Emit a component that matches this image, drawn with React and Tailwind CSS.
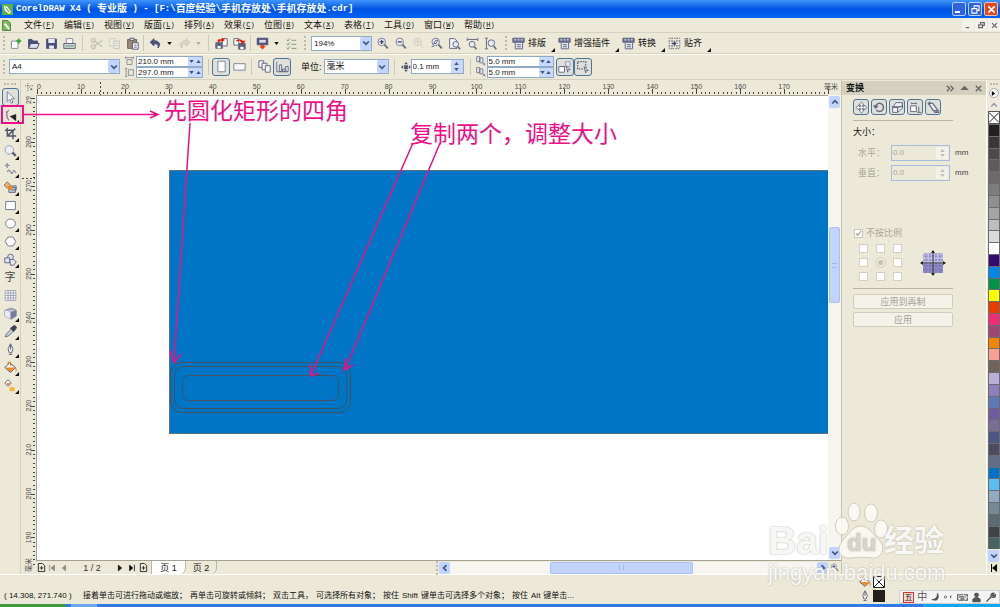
import React from 'react';

const INK = '#666b82'

const Svg = ({size = 'size-[13px]', children, className = ''}) => (
  <svg viewBox="0 0 16 16" fill="none" stroke={INK} strokeWidth="1.2" className={`shrink-0 ${size} ${className}`}>
    {children}
  </svg>
)

const lens = (
  <>
    <circle cx="7" cy="6" r="4.600" fill="#e9ebf6" stroke="#7d8198" />
    <path d="M10.500 9.500l4 4.500" strokeWidth="2.400" stroke="#6d7188" />
  </>
)

const disk = (
  <>
    <path d="M2 2.500h12v11.500H2z" fill="#4a4e78" stroke="#4a4e78" />
    <path d="M4 2.500h8v5H4zM5 10.500h6v4H5z" fill="#e8eaf5" stroke="none" />
  </>
)

const bucket = (
  <>
    <path d="M7 2l7 6-6 6-7-6z" fill="#f7f7fa" stroke="#4f5369" />
    <path d="M2 8h11l-5 5.500z" fill="#f08a1c" stroke="none" />
    <path d="M5 5V1.500h3V6M14 8q2 3 .5 5" stroke="#e07818" />
  </>
)

const nib = <path d="M8 1l3 6-1.500 5h-3L5 7zM8 2v6M6 14h4" fill="#f0f1f8" stroke="#5c6074" />

const icons = {
  new: <><path d="M3 5h8v9H3z" fill="#fff" stroke="#8a8d9c" /><path d="M12 2v6M9 5h6" stroke="#3fa53f" strokeWidth="2.600" /></>,
  open: <><path d="M2 13V3h4l1.500 2H13v3" fill="#4a4e78" stroke="#4a4e78" /><path d="M2 14l2.500-6H15l-2.500 6z" fill="#dfe2f0" stroke="#4a4e78" /></>,
  save: disk,
  print: <><path d="M4 8V2h8v6" fill="#fff" stroke="#8a8d9c" /><path d="M1 8h14v6H1z" fill="#d8dbe6" stroke="#5a5f78" /><path d="M3 11h10" stroke="#6ba86b" strokeWidth="1.600" /></>,
  cut: <><circle cx="4" cy="4" r="2.300" stroke="#c5c3b8" strokeWidth="1.800" /><circle cx="4" cy="12" r="2.300" stroke="#c5c3b8" strokeWidth="1.800" /><path d="M6 5l9 7M6 11l9-7" stroke="#c5c3b8" strokeWidth="1.800" /></>,
  copy: <><path d="M2 2h7v9H2z" fill="#eeece2" stroke="#d0cdc1" /><path d="M7 5h7v9H7z" fill="#eeece2" stroke="#c5c3b8" /><path d="M9 8h3M9 10.500h3" stroke="#cbc8bb" /></>,
  paste: <><path d="M2 3h11v11H2z" fill="#9a8a76" stroke="#6f6454" /><path d="M5 1.500h5v3H5z" fill="#d9d9de" stroke="#5a5f78" /><path d="M8 7h7v8H8z" fill="#f5f6fb" stroke="#5a5f78" /><path d="M10 10h3M10 12.500h3" /></>,
  undo: <path d="M6 2L1.500 6.500 6 11V8.500c4-.5 6 1 5 5 4-4 2-9-5-9z" fill="#4b5078" stroke="#4b5078" />,
  redo: <path d="M10 2l4.500 4.500L10 11V8.500c-4-.5-6 1-5 5-4-4-2-9 5-9z" fill="#d9d7cc" stroke="#cbc9be" />,
  import: <><path d="M1 7h8v7H1z" fill="#5a5f88" /><path d="M3 11h4v3H3z" fill="#fff" stroke="none" /><path d="M9 2h6v9H9z" fill="#fff" /><path d="M4 7V3.500h5M8.500 1.500l3 2-3 2z" fill="#d92318" stroke="#d92318" /></>,
  export: <><path d="M1 2h6v8H1z" fill="#fff" /><path d="M7 8h8v7H7z" fill="#5a5f88" /><path d="M9 12h4v3H9z" fill="#fff" stroke="none" /><path d="M4 5c5-3 8 0 8 1M10 5.500h4L12 8z" fill="none" stroke="#d92318" strokeWidth="1.600" /></>,
  launch: <><path d="M1.500 1.500h13v8h-13z" fill="#4e5378" stroke="#4e5378" /><path d="M4 3.500h8v3.500H4z" fill="#d8dcf0" stroke="none" /><path d="M6 9.500h4v2h2L8 15.500 4 11.500h2z" fill="#e8461a" stroke="none" /></>,
  list: <path d="M2 3l1.500 2L6 1.500M2 8l1.500 2L6 6.500M2 13l1.500 2L6 11.500M8 4h6M8 9h6M8 14h6" stroke="#7c9a78" />,
  zoomIn: <>{lens}<path d="M4.500 6h5M7 3.500v5" stroke="#3c4068" strokeWidth="1.600" /></>,
  zoomOut: <>{lens}<path d="M4.500 6h5" stroke="#3c4068" strokeWidth="1.600" /></>,
  zoomSel: <><circle cx="7" cy="6" r="4.600" stroke="#d0cec3" /><path d="M10.500 9.500l4 4.500M3 6h8M7 2v8" stroke="#d0cec3" /></>,
  zoomAll: <>{lens}<path d="M4.500 8L7 4h2.500L7.500 8zM2 12l3-1" /></>,
  zoomPage: <><path d="M2 2h6l3 3v9H2z" fill="#f4f5fb" /><circle cx="9.500" cy="9" r="3.500" fill="#e9ebf6" /><path d="M12 12l3 3" strokeWidth="2" /></>,
  zoomWide: <><path d="M1.500 1v4M14.500 1v4M2 3h12" /><circle cx="7.500" cy="9" r="3.600" fill="#e9ebf6" /><path d="M10 12l3 3" strokeWidth="2" /></>,
  zoomTall: <><path d="M1 1.500h4M1 14.500h4M3 2v12" /><circle cx="9" cy="7.500" r="4" fill="#e9ebf6" /><path d="M12 11l3 4" strokeWidth="2" /></>,
  layout: <><path d="M1 1.500h14v5H1z" fill="#6b7094" /><path d="M3 3.500h2M7 3.500h2M11 3.500h2" stroke="#fff" /><path d="M4 6.500h9v8H4z" fill="#e4e6f2" /><path d="M6 9.500h5M6 12h5" /></>,
  snap: <><path d="M1.500 1.500h13v13h-13zM5 1v14M11 1v14M1 5h14M1 11h14" strokeDasharray="1.500 1.500" /><path d="M5 8h5M8 5.500v5" stroke="#3c4068" strokeWidth="1.800" /></>,
  pageW: <path d="M1 3h14M1 1v4M15 1v4M3.500 6.500h9v8.500h-9z" />,
  pageH: <path d="M2 1v14M0 1h4M0 15h4M6 3h9v10H6z" />,
  portrait: <path d="M3.500 1.500h9v13h-9z" fill="#fff" stroke="#85889a" />,
  landscape: <path d="M1 4.500h14v8H1z" fill="#f8f8fb" stroke="#85889a" />,
  pages: <><path d="M1 1h6v8H1z" fill="#f4f5fb" /><path d="M5 4h6v8H5z" fill="#f4f5fb" /><path d="M9 7h6v8H9z" fill="#f4f5fb" /></>,
  bars: <path d="M1 2v12.500h14M4 6h3v8H4zM8 11h3v3H8zM12 8h3v6h-3z" fill="#f0f1f8" />,
  nudge: <path d="M8 0l3 3.500H5zM8 16l3-3.500H5zM0 8l3.500-3v6zM16 8l-3.500-3v6zM5 5h6v6H5z" fill="#4f5369" stroke="none" />,
  dup: <path d="M1 1h5v8H1zM6 3h5v8H6zM11 11l4 4M15 11l-4 4" fill="#dfe1ec" />,
  treat: <><path d="M1 8h7v7H1z" fill="#fff" /><path d="M9 2h6v6H9z" fill="#dfe1ec" stroke="#a0a3b4" /><path d="M10 7l5 5h-3v3z" fill="#fff" /></>,
  marquee: <><path d="M2 2h10v9H2z" strokeDasharray="2 1.200" strokeWidth="1.600" /><path d="M10 8l5 5h-3v3z" fill="#fff" /></>,
  pick: <path d="M4 1v12l3-3 2 5 2-1-2-4.500h4z" fill="#fff" stroke="#80849c" />,
  shape: <><path d="M6 1C2 5 3 10 6 14M2 4l3-1M3 9l2-1" stroke="#85899c" strokeWidth="1.500" /><path d="M7 9l8-3v9z" fill="#22242e" stroke="none" /></>,
  crop: <path d="M4 1v10h11M1 4h10v11M14 2L5 10" stroke="#50546e" strokeWidth="1.700" />,
  zoom: <><circle cx="6.500" cy="6" r="5.200" fill="#eceef8" stroke="#9a9db0" /><path d="M10.500 9.500l4 4" strokeWidth="3" stroke="#5d6178" /></>,
  freehand: <path d="M4 0v6M1 3h6M4 11c2-4 3-2 4 0s2 3 3 0 2-1 4 1" stroke="#8a8da0" strokeWidth="1.500" />,
  smart: <><path d="M4 1l4 4-4 4-4-4z" fill="#eeb06c" stroke="#8a7a6c" /><path d="M6 8h8v6H6zM9 6h6v5H9z" fill="#c6c8d8" /><path d="M5 6h5v5H5z" fill="#e08a2c" stroke="none" /></>,
  rect: <path d="M2 3h12v10H2z" fill="#fff" stroke="#74788c" />,
  ellipse: <ellipse cx="8" cy="8" rx="6" ry="5.500" fill="#fff" stroke="#74788c" />,
  polygon: <path d="M5 2.500h6L14.500 8 11 13.500H5L1.500 8z" fill="#fff" stroke="#74788c" />,
  shapes: <><circle cx="8" cy="5" r="3.500" fill="#e3e5ef" /><path d="M1 6h6v6H1z" fill="#e3e5ef" /><path d="M7 8h5l3 3-3 4H8z" fill="#e3e5ef" /></>,
  table: <path d="M1.500 2h13v12h-13zM5 2v12M8.200 2v12M11.500 2v12M2 5h12M2 8h12M2 11h12" fill="#fff" stroke="#9194aa" strokeWidth="1" />,
  cube: <><path d="M1 4l8-2.500L15 4v7l-6 4-8-4z" fill="#b8bbd0" stroke="#85899e" /><path d="M1 4l7 2.500v8L1 11z" fill="#e9ebf5" stroke="none" /><path d="M8 6.500L15 4v7l-7 3.500z" fill="#787d9c" stroke="none" /></>,
  dropper: <><path d="M1.500 14.500L3 11l6-6 2.500 2.500-6 6z" fill="#c8d3dc" /><path d="M8 4l4 4 3-4c1-2-2-4-3-3z" fill="#3f4458" stroke="#3f4458" /></>,
  nib,
  bucket,
  interactive: <><path d="M5 1l4 4-4 4-4-4z" fill="#fff" /><path d="M3 5h5L5 8.500z" fill="#ec8b24" stroke="none" /><path d="M7 10h6v5H7z" fill="#f4b830" stroke="none" /></>,
  rotate: <path d="M4 11a5 5 0 1 0-1-4M1 5l2 3.500L6 6" strokeWidth="1.800" />,
  move: <path d="M8 1l3 4H9v2h2V5l4 3-4 3V9H9v2h2l-3 4-3-4h2V9H5v2L1 8l4-3v2h2V5H5z" fill="#fff" strokeWidth="1" />,
  scale: <path d="M2 8h6v6H2zM2 8l4-6h8v4L8 8M14 2v7l-6 5M1 7h14" fill="#eef0f8" />,
  size: <path d="M2 6h7v7H2zM3 2v2M9 2v2M3 3h6M12 7v7M10 14h5" fill="#fff" />,
  skew: <path d="M2 3h5l7 9H8zM4 1l-3 3M9 14h6" fill="#eef0f8" strokeWidth="1.600" />,
}

const Grip = ({className = ''}) => (
  <span className={`w-[3px] h-[14px] shrink-0 border-l-2 border-dotted border-[#bdb9a8] ${className}`} />
)

const Sep = ({className = 'mx-1'}) => <span className={`w-px h-4 shrink-0 bg-[#cdc9b8] ${className}`} />

const IconButton = ({name, label, active, className = 'w-[18px] h-[18px]'}) => (
  <button
    type="button"
    aria-label={label || name}
    className={`shrink-0 flex items-center justify-center ${className} ${active ? 'rounded-[3px] border border-[#4d7597] bg-[#dfe0da]' : ''}`}
  >
    <Svg>{icons[name]}</Svg>
  </button>
)

const Caret = ({className = ''}) => (
  <svg viewBox="0 0 6 4" className={`w-[5px] h-[3px] shrink-0 ${className}`}><path d="M0 0h6L3 4z" fill="currentColor" /></svg>
)

const Chevron = ({className = ''}) => (
  <svg viewBox="0 0 8 8" className={`size-[8px] ${className}`}>
    <path d="M1.200 2.500L4 5.300l2.800-2.800" fill="none" stroke="#3f567f" strokeWidth="1.700" />
  </svg>
)

const Corner = () => (
  <svg viewBox="0 0 4 4" className="size-[4px] absolute right-0 bottom-0"><path d="M4 0v4H0z" fill="#111" /></svg>
)

const DropDown = ({label, value, className}) => (
  <div className={`relative shrink-0 h-[15px] flex ${className}`}>
    <select
      aria-label={label}
      defaultValue={value}
      className="appearance-none w-full h-full pl-[2px] text-[8px] leading-[13px] bg-white border border-[#8fabc8] text-[#222]"
    >
      <option>{value}</option>
    </select>
    <span className="absolute right-px top-px bottom-px w-[11px] rounded-[2px] bg-[#c2d3fc] flex items-center justify-center pointer-events-none">
      <Chevron />
    </span>
  </div>
)

const MeasureInput = ({label, value, tall, className}) => (
  <div className={`flex bg-white border border-[#8fabc8] ${tall ? 'h-[15px]' : 'h-[11px]'} ${className}`}>
    <input aria-label={label} defaultValue={value} className="min-w-0 flex-1 pl-px text-[8px] leading-[9px] text-[#222] outline-none" />
    <span className={`flex bg-[#c9d8fb] text-[#3f567f] items-center justify-evenly ${tall ? 'flex-col w-[12px]' : 'w-[14px]'}`}>
      {tall ? <><Caret className="rotate-180" /><Caret /></> : <><Caret /><Caret className="rotate-180" /></>}
    </span>
  </div>
)

// CJK glyphs a step larger than the latin ones, like the system bitmap font
const Title = ({text}) => (
  <h1 className="font-bold text-white whitespace-pre flex items-center leading-[14px]">
    {text.split(/([\u4e00-\u9fff]+)/).map((part, i) => (
      <span key={i} className={i % 2 ? 'text-[10px]' : "text-[9px] font-['Liberation_Mono',monospace]"}>{part}</span>
    ))}
  </h1>
)

const menus = [
  ['文件', 'F'], ['编辑', 'E'], ['视图', 'V'], ['版面', 'L'], ['排列', 'A'], ['效果', 'C'],
  ['位图', 'B'], ['文本', 'X'], ['表格', 'T'], ['工具', 'O'], ['窗口', 'W'], ['帮助', 'H'],
]

const tools = [
  'pick', 'shape', 'crop', 'zoom', 'freehand', 'smart', 'rect', 'ellipse', 'polygon',
  'shapes', 'text', 'table', 'cube', 'dropper', 'nib', 'bucket', 'interactive',
]

const noFlyout = ['pick', 'text', 'table']

const swatches = [
  '#221f1c', '#3a3633', '#4c4947', '#5e5b5a', '#6c6b6a', '#7d7d7c', '#8f8f8f', '#a5a5a5', '#bebebe',
  '#dbdbdb', '#ffffff', '#340c70', '#0088e8', '#009448', '#ffff00', '#eb3c00', '#f02c76', '#a04676',
  '#f58400', '#fa9e96', '#71635a', '#b8aed6', '#8e80b8', '#6078b8', '#6e5a9e', '#786e98', '#485880',
  '#4e4a60', '#5e7088', '#0074c8', '#5abef0', '#90aac0', '#748a96', '#5c6a72', '#3e4446', '#466462',
]

const hint = [
  '接着单击可进行拖动或缩放；', '再单击可旋转或倾斜；', '双击工具，', '可选择所有对象；', '按住',
  'Shift', '键单击可选择多个对象；', '按住', 'Alt', '键单击...',
]

const STEP = 4.395

const TitleBar = () => (
  <header className="h-[18px] shrink-0 flex items-center gap-[3px] pl-[2px] pr-[2px] bg-linear-to-b from-[#3f95fb] via-[#0054e3] to-[#0563f5]">
    <svg viewBox="0 0 12 12" className="size-[11px]">
      <path d="M0 0h12v12H0z" fill="#5fb048" />
      <path d="M2 2l4 1 4 6-2 2-5-4z" fill="#fff" />
      <path d="M4 4l4 5" stroke="#2d7a1e" />
    </svg>
    <Title text="CorelDRAW X4 ( 专业版 ) - [F:\百度经验\手机存放处\手机存放处.cdr]" />
    <div className="ml-auto flex gap-[2px]">
      <button aria-label="最小化" className="size-[14px] rounded-[2px] border border-[#b7cdf8] bg-[#2f62dc] flex items-end p-[2px]">
        <span className="w-[5px] h-[2px] bg-white" />
      </button>
      <button aria-label="还原" className="size-[14px] rounded-[2px] border border-[#b7cdf8] bg-[#2f62dc] flex items-center justify-center">
        <svg viewBox="0 0 10 10" className="size-[9px]" fill="none" stroke="#fff" strokeWidth="1.200"><path d="M3.500 3V1h5.500v5H7M1 4h5.500v5H1z" /></svg>
      </button>
      <button aria-label="关闭" className="size-[14px] rounded-[2px] border border-[#f0c2b4] bg-[#dc4a24] flex items-center justify-center">
        <svg viewBox="0 0 10 10" className="size-[9px]" stroke="#fff" strokeWidth="1.800"><path d="M1.500 1.500l7 7M8.500 1.500l-7 7" /></svg>
      </button>
    </div>
  </header>
)

const MenuBar = () => (
  <nav className="h-[15px] shrink-0 flex items-center border-b border-[#d6d2c2] pl-[2px]">
    <svg viewBox="0 0 10 12" className="w-[9px] h-[11px] mr-[13px]">
      <path d="M.5.5h6l3 3v8h-9z" fill="#7cba5a" stroke="#4a7a3a" />
      <path d="M3 4l5 6" stroke="#fff" strokeWidth="2" />
    </svg>
    {menus.map(([name, key]) => (
      <button key={key} className="w-[40px] shrink-0 whitespace-nowrap text-left text-[9px] leading-[13px] flex items-center">
        {name}<span className="text-[7px] font-['Liberation_Mono',monospace]">(<u>{key}</u>)</span>
      </button>
    ))}
    <div className="ml-auto flex gap-px text-[#666]">
      {['M1 8h5', 'M3.500 3V1h5.500v4H7M1 4h5.500v4H1z', 'M1.500 1.500l7 7M8.500 1.500l-7 7'].map((d) => (
        <button key={d} aria-label="文档窗口" className="w-[12px] h-[12px] bg-[#f3f1e9] flex items-center justify-center">
          <svg viewBox="0 0 10 10" className="size-[7px]" fill="none" stroke="#666" strokeWidth="1.700"><path d={d} /></svg>
        </button>
      ))}
    </div>
  </nav>
)

const LabelledTool = ({icon, text}) => (
  <button className="relative h-[18px] pr-[9px] mr-[3px] flex items-center gap-[3px] shrink-0 text-[9px] leading-[12px] whitespace-nowrap">
    <Svg>{icons[icon]}</Svg>{text}
    <Corner />
  </button>
)

const StandardBar = () => (
  <div className="h-[21px] shrink-0 flex items-center border-b border-[#d6d2c2] shadow-[0_1px_0_#fbfaf5] pl-[3px]">
    <Grip />
    <IconButton name="new" /><IconButton name="open" /><IconButton name="save" /><IconButton name="print" />
    <Sep />
    <IconButton name="cut" /><IconButton name="copy" /><IconButton name="paste" />
    <Sep className="mx-[2px]" />
    <IconButton name="undo" /><Caret className="mx-[3px]" />
    <IconButton name="redo" /><Caret className="mx-[3px] text-[#aaa]" />
    <Sep className="ml-[4px] mr-[3px]" />
    <IconButton name="import" /><IconButton name="export" />
    <Sep className="mx-[2px]" />
    <IconButton name="launch" /><Caret className="mx-[3px]" />
    <IconButton name="list" />
    <Grip className="mx-[4px]" />
    <DropDown label="缩放级别" value="194%" className="w-[61px] mr-px" />
    <IconButton name="zoomIn" /><IconButton name="zoomOut" /><IconButton name="zoomSel" /><IconButton name="zoomAll" />
    <IconButton name="zoomPage" /><IconButton name="zoomWide" /><IconButton name="zoomTall" />
    <Grip className="ml-[6px] mr-[4px]" />
    <LabelledTool icon="layout" text="排版" />
    <LabelledTool icon="layout" text="增强插件" />
    <LabelledTool icon="layout" text="转换" />
    <LabelledTool icon="snap" text="贴齐" />
  </div>
)

const PropertyBar = () => (
  <div className="h-[26px] shrink-0 flex items-center border-b border-[#d6d2c2] pl-[3px]">
    <Grip />
    <DropDown label="纸张类型" value="A4" className="w-[111px] ml-[3px]" />
    <div className="flex flex-col gap-[3px] ml-[5px] mr-[2px]">
      <Svg size="size-[9px]">{icons.pageW}</Svg>
      <Svg size="size-[9px]">{icons.pageH}</Svg>
    </div>
    <div>
      <MeasureInput label="纸张宽度" value="210.0 mm" className="w-[67px]" />
      <MeasureInput label="纸张高度" value="297.0 mm" className="w-[67px]" />
    </div>
    <Sep className="ml-[5px] mr-[3px]" />
    <IconButton name="portrait" active />
    <IconButton name="landscape" />
    <Sep className="ml-[3px] mr-[3px]" />
    <IconButton name="pages" />
    <IconButton name="bars" active />
    <label htmlFor="units" className="ml-[10px] mr-[2px] text-[9px] leading-[12px] whitespace-nowrap">单位:</label>
    <div className="relative shrink-0 h-[15px] w-[65px] flex">
      <select id="units" className="appearance-none w-full h-full pl-[2px] text-[9px] leading-[13px] bg-white border border-[#8fabc8]">
        <option>毫米</option>
      </select>
      <span className="absolute right-px top-px bottom-px w-[11px] rounded-[2px] bg-[#c2d3fc] flex items-center justify-center pointer-events-none">
        <Chevron />
      </span>
    </div>
    <Sep className="ml-[5px] mr-[6px]" />
    <Svg size="size-[10px]">{icons.nudge}</Svg>
    <MeasureInput label="微调偏移" value="0.1 mm" tall className="w-[53px]" />
    <Sep className="ml-[6px] mr-[5px]" />
    <div className="flex flex-col gap-px mr-px">
      <Svg size="size-[10px]">{icons.dup}</Svg>
      <Svg size="size-[10px]">{icons.dup}</Svg>
    </div>
    <div className="mr-[2px]">
      <MeasureInput label="再制距离 X" value="5.0 mm" className="w-[67px]" />
      <MeasureInput label="再制距离 Y" value="5.0 mm" className="w-[67px]" />
    </div>
    <IconButton name="treat" active />
    <IconButton name="marquee" active />
  </div>
)

const Toolbox = () => (
  <aside className="w-[21px] shrink-0 border-r border-[#d6d2c2] flex flex-col items-center">
    <span className="w-[12px] h-[5px] shrink-0 mt-[3px] border-t-2 border-dotted border-[#bdb9a8]" />
    {tools.map((t) => (
      <button
        key={t}
        aria-label={t}
        className={`relative w-[17px] h-[18px] shrink-0 flex items-center justify-center ${t === 'pick' ? 'rounded-[3px] border border-[#4d7597] bg-[#dfe0da]' : ''}`}
      >
        {t === 'text' ? <span className="text-[11px] leading-none text-[#444]">字</span> : <Svg>{icons[t]}</Svg>}
        {!noFlyout.includes(t) && <Corner />}
      </button>
    ))}
  </aside>
)

const HorizontalRuler = () => (
  <svg className="w-full h-[15px] font-['Liberation_Sans','Noto_Sans_CJK_SC',sans-serif]" fontSize="7" fill="#4a4a4a">
    {Array.from({length: 181}, (_, i) => (
      <rect key={i} x={Math.round(i * STEP)} y={i % 10 ? 12 : 9} width="1" height={i % 10 ? 2 : 5} fill="#444" />
    ))}
    {Array.from({length: 18}, (_, i) => (
      <text key={i} x={i ? i * STEP * 10 : 2} y="9" textAnchor="middle">{i * 10}</text>
    ))}
    <text x="794" y="9" textAnchor="middle">毫米</text>
    <path d="M63.500 2v13" stroke="#444" strokeDasharray="2 2" />
  </svg>
)

const VerticalRuler = () => (
  <svg className="w-[15px] h-full font-['Liberation_Sans','Noto_Sans_CJK_SC',sans-serif]" fontSize="7" fill="#4a4a4a">
    {Array.from({length: 107}, (_, i) => (
      <rect key={i} x={i % 10 ? 12 : 10} y={Math.round(3 + i * STEP)} width={i % 10 ? 2 : 4} height="1" fill="#444" />
    ))}
    <text transform="translate(10 5) rotate(-90)" textAnchor="middle">29</text>
    {Array.from({length: 10}, (_, i) => (
      <text key={i} transform={`translate(10 ${3 + (i + 1) * STEP * 10}) rotate(-90)`} textAnchor="middle">{280 - i * 10}</text>
    ))}
    <text transform="translate(10 470) rotate(-90)" textAnchor="middle">毫米</text>
    <path d="M1 83.500h13" stroke="#444" strokeDasharray="2 2" />
  </svg>
)

const Canvas = () => (
  <div className="relative flex-1 min-w-0 bg-white border-l border-t border-[#a5a294] overflow-hidden">
    <svg className="absolute inset-0 w-full h-full" fill="none" stroke="#43525c">
      <rect x="132.500" y="74.500" width="1600" height="263" fill="#0075c5" stroke="#5f7078" />
      <rect x="133.500" y="266.500" width="180" height="50" rx="11" />
      <rect x="137.500" y="270.500" width="172" height="42" rx="9" />
      <rect x="145.500" y="279.500" width="156" height="25" rx="6" />
    </svg>
  </div>
)

const ScrollButton = ({className = '', turn}) => (
  <button aria-label="滚动" className={`shrink-0 rounded-[2px] bg-[#c2d3fc] flex items-center justify-center ${className}`}>
    <Chevron className={turn} />
  </button>
)

const VScroll = () => (
  <div className="w-[13px] shrink-0 flex flex-col bg-[#f6f5ef] py-px px-px">
    <ScrollButton className="h-[12px]" turn="rotate-180" />
    <div className="basis-[120px] grow" />
    <div className="h-[76px] rounded-[2px] bg-[#c2d3fc] border border-[#a9c0f5] flex items-center justify-center">
      <span className="size-[5px] border-y border-[#9db7f0]" />
    </div>
    <div className="basis-[245px] grow" />
    <ScrollButton className="h-[12px]" />
  </div>
)

const NavGlyph = ({d, dim}) => (
  <button aria-label="翻页" className="w-[12px] h-[12px] flex items-center justify-center shrink-0">
    <svg viewBox="0 0 10 10" className="size-[8px]" fill={dim ? '#888' : '#111'} stroke={dim ? '#888' : '#111'}><path d={d} /></svg>
  </button>
)

const addPage = 'M1.500.5h4.500l2.500 2.500v6.500h-7V.5M3 5.500h4M5 3.500v4'

const PageAdd = () => (
  <button aria-label="添加页" className="w-[10px] h-[12px] flex items-center justify-center shrink-0">
    <svg viewBox="0 0 10 10" className="size-[9px]" fill="none" stroke="#222"><path d={addPage} /></svg>
  </button>
)

const PageNav = () => (
  <div className="h-[14px] shrink-0 flex items-center border-t border-[#a5a294] text-[9px] leading-[12px]">
    <PageAdd />
    <NavGlyph d="M2 1v8M8 1.500v7L4 5z" dim />
    <NavGlyph d="M7 1.500v7L3 5z" dim />
    <span className="w-[44px] text-center text-[#333]">1 / 2</span>
    <NavGlyph d="M3 1.500v7L7 5z" />
    <NavGlyph d="M8 1v8M2 1.500v7L6 5z" />
    <PageAdd />
    <button className="ml-[3px] h-[13px] w-[35px] bg-white border-x border-[#bbb7a6] rounded-br-[6px]">页 1</button>
    <button className="h-[13px] w-[31px] border-r border-[#bbb7a6] rounded-br-[6px]">页 2</button>
    <div className="basis-[219px] grow-0 shrink" />
    <Grip className="h-[10px]" />
    <ScrollButton className="w-[11px] h-[12px]" turn="rotate-90" />
    <div className="flex-1 h-[12px] flex bg-[#f6f5ef]">
      <div className="basis-[99px] grow" />
      <div className="w-[143px] rounded-[2px] bg-[#c2d3fc] border border-[#a9c0f5] flex items-center justify-center">
        <span className="size-[5px] border-x border-[#9db7f0]" />
      </div>
      <div className="basis-[124px] grow" />
    </div>
    <ScrollButton className="w-[11px] h-[12px]" turn="-rotate-90" />
    <span className="w-[12px] flex justify-center mr-px"><Svg size="size-[9px]">{icons.zoomIn}</Svg></span>
  </div>
)

const Workspace = () => (
  <main className="flex-1 min-w-0 flex flex-col">
    <div className="h-[15px] shrink-0 flex">
      <div className="w-[16px] shrink-0 flex items-center justify-center">
        <Svg size="size-[9px]"><path d="M5 0v16M0 5h16M8 8l6 6M12 9v3h-3" strokeDasharray="2 2" stroke="#333" /></Svg>
      </div>
      <div className="flex-1 min-w-0 overflow-hidden"><HorizontalRuler /></div>
    </div>
    <div className="flex-1 min-h-0 flex">
      <div className="w-[15px] shrink-0 overflow-hidden"><VerticalRuler /></div>
      <div className="flex-1 min-w-0 flex flex-col">
        <div className="flex-1 min-h-0 flex">
          <Canvas />
          <VScroll />
        </div>
        <PageNav />
      </div>
    </div>
  </main>
)

const SizeField = ({id, text}) => (
  <div className="flex items-center h-[20px] text-[9px] leading-[12px]">
    <label htmlFor={id} className="w-[33px] text-[#aaa79a] whitespace-nowrap">{text}：</label>
    <div className="w-[59px] h-[16px] flex border border-[#a3bedb]">
      <input id={id} disabled defaultValue="0.0" className="min-w-0 flex-1 pl-px text-[8px] leading-[10px] text-[#aaa79a]" />
      <span className="w-[12px] m-px bg-[#f3f1e9] flex flex-col items-center justify-evenly text-[#c0bdb0]">
        <Caret className="rotate-180" /><Caret />
      </span>
    </div>
    <span className="ml-[5px] text-[8px] text-[#444]">mm</span>
  </div>
)

const Docker = () => (
  <section className="w-[145px] shrink-0 border-l border-[#c6c2b0]">
    <div className="h-[14px] mt-px bg-[#d3d0bf] flex items-center pl-[4px] pr-[3px]">
      <h2 className="text-[9px] font-bold leading-[12px]">变换</h2>
      <div className="ml-auto flex items-center gap-[5px]">
        {['M1 2l3 3-3 3M5 2l3 3-3 3', 'M2 6h6L5 3z', 'M2 2l6 6M8 2l-6 6'].map((d, i) => (
          <button key={d} aria-label="面板" className="flex">
            <svg viewBox="0 0 10 10" className="size-[9px]" fill={i === 1 ? '#666' : 'none'} stroke="#666" strokeWidth="1.400"><path d={d} /></svg>
          </button>
        ))}
      </div>
    </div>
    <div className="ml-[11px] w-[100px] pt-[4px]">
      <div className="flex gap-[2px] pb-[5px] border-b border-[#b9b6a7]">
        {['move', 'rotate', 'scale', 'size', 'skew'].map((n) => (
          <IconButton key={n} name={n} active className="w-[16px] h-[16px]" />
        ))}
      </div>
      <h3 className="mt-[5px] mb-[4px] text-[9px] leading-[13px]">大小：</h3>
    </div>
    <div className="ml-[16px]">
      <SizeField id="sx" text="水平" />
      <SizeField id="sy" text="垂直" />
    </div>
    <div className="ml-[11px] w-[100px]">
      <label className="mt-[44px] flex items-center gap-[3px] text-[9px] leading-[12px] text-[#aaa79a]">
        <input type="checkbox" defaultChecked disabled className="peer appearance-none size-[9px] ml-px bg-white border border-[#cac8bb]" />
        <svg viewBox="0 0 8 8" className="size-[7px] -ml-[11px] mr-px" fill="none" stroke="#aaa79a" strokeWidth="1.400"><path d="M1 4l2 2 4-5" /></svg>
        不按比例
      </label>
      <div className="mt-[5px] pb-[7px] flex items-center border-b border-[#b9b6a7]">
        <div className="ml-[6px] grid grid-cols-3 gap-x-[8px] gap-y-[5px]">
          {Array.from({length: 9}, (_, i) => (
            <input
              key={i}
              type="radio"
              name="anchor"
              disabled
              aria-label={`锚点 ${i + 1}`}
              className={`appearance-none size-[9px] border border-[#d4d1c3] ${i === 4 ? 'rounded-full bg-[#c6c3b5] border-2 border-[#ece9d8] outline outline-[#d4d1c3]' : 'bg-white'}`}
            />
          ))}
        </div>
        <svg viewBox="0 0 26 26" className="ml-[18px] size-[26px]">
          <path d="M3 3h20v20H3z" fill="#c3c0e6" />
          <path d="M3 14h20v9H3z" fill="#8f8bc4" />
          <path d="M6 3v20M10 3v20M16 3v20M20 3v20M3 6h20M3 10h20M3 16h20M3 20h20" stroke="#6f6ca4" strokeDasharray="2 1" strokeWidth=".7" />
          <path d="M13 1v24M1 13h24" stroke="#333" />
          <path d="M13 0l2 3h-4zM13 26l2-3h-4zM0 13l3-2v4zM26 13l-3-2v4z" fill="#222" />
        </svg>
      </div>
      <div className="mt-[5px] flex flex-col gap-[3px] text-[9px] leading-[12px] text-[#a3a093]">
        <button disabled className="h-[15px] border border-[#d0cdbd] rounded-[2px] bg-[#f4f3ea]">应用到再制</button>
        <button disabled className="h-[15px] border border-[#d0cdbd] rounded-[2px] bg-[#f4f3ea]">应用</button>
      </div>
    </div>
  </section>
)

const Palette = () => (
  <aside className="w-[14px] shrink-0 border-l border-white flex flex-col items-center">
    <span className="w-[8px] mt-[3px] border-t-2 border-dotted border-[#bdb9a8]" />
    <button aria-label="调色板菜单" className="mt-[3px] size-[10px] rounded-full bg-white border border-[#aaa] flex items-center justify-center">
      <svg viewBox="0 0 6 6" className="size-[5px]"><path d="M1 0l4 3-4 3z" /></svg>
    </button>
    <button aria-label="向上" className="w-[11px] h-[11px] my-px bg-[#f0eee4] flex items-center justify-center opacity-50"><Chevron className="rotate-180" /></button>
    <button aria-label="无填充" className="w-[12px] h-[13px] shrink-0 bg-white border border-[#555]">
      <svg viewBox="0 0 10 10" className="w-full h-full" stroke="#222"><path d="M0 0l10 10M10 0L0 10" /></svg>
    </button>
    <div className="flex-1 w-[12px] flex flex-col">
      {swatches.map((c) => (
        <button key={c} aria-label={c} className="flex-1 border border-b-0 border-[#6c6c70]" style={{backgroundColor: c}} />
      ))}
    </div>
    <ScrollButton className="w-[11px] h-[12px] mt-px" />
    <button aria-label="展开" className="h-[12px] flex items-center">
      <svg viewBox="0 0 8 8" className="size-[8px]"><path d="M1 0h1v8H1zM7 0v8L2 4z" /></svg>
    </button>
  </aside>
)

const Notes = () => (
  <div className="absolute inset-0 pointer-events-none text-[#ee0f88]">
    <svg className="w-full h-full" fill="none" stroke="currentColor" strokeWidth="1.500">
      <rect x="2" y="26" width="21" height="17" strokeWidth="2" />
      <path d="M22 34.500h135M150 31l8 3.500-8 3.500" />
      <path d="M190 43L174 282M170 270l4 13 7-9" />
      <path d="M413 63L311 295M310 284l1 12 8-3" />
      <path d="M440 63L345 290M346 278l-2 12 9-5" />
    </svg>
    <p className="absolute left-[164px] top-[16px] text-[23px] leading-[30px] whitespace-nowrap">先圆化矩形的四角</p>
    <p className="absolute left-[410px] top-[39px] text-[23px] leading-[30px] whitespace-nowrap">复制两个，调整大小</p>
  </div>
)

const Watermark = () => (
  <div className="absolute right-[54px] bottom-[20px] w-[178px] h-[86px] pointer-events-none text-white/90 font-bold leading-none [text-shadow:0_0_2px_#a8a69c]">
    <span className="absolute left-0 top-[20px] text-[39px]">Bai</span>
    <svg viewBox="0 0 54 60" className="absolute left-[66px] top-0 w-[54px] h-[60px]" fill="#fbfaf6" fillOpacity=".85" stroke="#cfccbe">
      <ellipse cx="8" cy="25" rx="6.500" ry="9" />
      <ellipse cx="20" cy="11" rx="6" ry="9" />
      <ellipse cx="37" cy="12" rx="6.500" ry="9" />
      <ellipse cx="47" cy="28" rx="6.500" ry="9" />
      <path d="M27 25c8 0 12 9 18 14 8 8 2 19-7 18-8-1-14-1-22 0-10 1-15-9-7-18 6-5 9-14 18-14z" />
    </svg>
    <span className="absolute left-[79px] top-[30px] text-[24px] text-[#d8d5c6]">du</span>
    <span className="absolute left-[116px] top-[25px] text-[30px]">经验</span>
    <span className="absolute left-0 top-[61px] text-[22px] font-normal">jingyan.baidu.com</span>
  </div>
)

const StatusBar = () => (
  <footer className="h-[30px] shrink-0 border-t border-white flex justify-between text-[8px]">
    <div className="self-end pb-[2px] pl-[4px] flex items-center leading-[12px] whitespace-nowrap">
      <span className="w-[79px]">( 14.308, 271.740 )</span>
      <p className="flex gap-[3px]">{hint.map((h, i) => <span key={i}>{h}</span>)}</p>
    </div>
    <div className="flex">
      <div className="grid grid-cols-[12px_12px] gap-x-[2px] gap-y-[2px] pt-px mr-[14px] content-start items-center">
        <Svg size="size-[12px]">{icons.bucket}</Svg>
        <svg viewBox="0 0 12 12" className="size-[12px] bg-white" stroke="#222" fill="none"><path d="M.5.5h11v11H.5zM1 1l10 10M11 1L1 11" /></svg>
        <Svg size="size-[12px]">{icons.nib}</Svg>
        <span className="size-[12px] bg-[#221f1c]" />
      </div>
      <div className="self-end w-[101px] h-[14px] bg-[#f4f4f4] border border-[#cfcfcf] flex items-center justify-between px-[3px] text-[#555]">
        <span className="size-[11px] border border-[#d8362c] bg-[#f6d4cf] text-[8px] leading-[9px] text-center text-[#222]">五</span>
        <span className="text-[10px] leading-[12px]">中</span>
        <Svg size="size-[10px]"><path d="M11 1c1 7-3 11-9 10 4 5 12 3 12-4 0-3-1-5-3-6z" fill="#555" stroke="none" /></Svg>
        <Svg size="size-[10px]"><circle cx="4" cy="8" r="1.800" stroke="#555" /><path d="M11 6h3l-2 5z" fill="#555" stroke="none" /></Svg>
        <Svg size="size-[11px]"><path d="M1 4h14v8H1zM3 7h10M5 10h6" stroke="#555" strokeDasharray="8 1" strokeWidth="1.700" /></Svg>
        <Svg size="size-[11px]"><path d="M8 1a3 3 0 0 1 1 6l5 3v5H2v-5l5-3a3 3 0 0 1 1-6z" fill="#555" stroke="none" /></Svg>
        <Svg size="size-[11px]"><path d="M2 14l7-7M9 7c-1-3 1-6 4-5l-2 3 1 1 3-2c1 3-2 5-6 3z" stroke="#555" strokeWidth="2" /></Svg>
      </div>
    </div>
  </footer>
)

const App = () => {
  return (
    <div className="relative h-screen overflow-hidden flex flex-col bg-[#ece9d8] text-[#111] font-['Liberation_Sans','Noto_Sans_CJK_SC',sans-serif]">
      <TitleBar />
      <MenuBar />
      <StandardBar />
      <PropertyBar />
      <div className="relative flex-1 min-h-0 flex">
        <Toolbox />
        <Workspace />
        <Docker />
        <Palette />
        <Notes />
      </div>
      <StatusBar />
      <div className="h-[3px] shrink-0 flex bg-[#2f7be6]">
        <span className="w-[66px] bg-[#3c9a3c] rounded-tr-[3px]" />
        <span className="ml-[5px] w-[26px] bg-[#6ba6f5]" />
        <span className="ml-auto w-[77px] bg-[#12a7f0]" />
      </div>
      <Watermark />
    </div>
  );
};

export default App;
